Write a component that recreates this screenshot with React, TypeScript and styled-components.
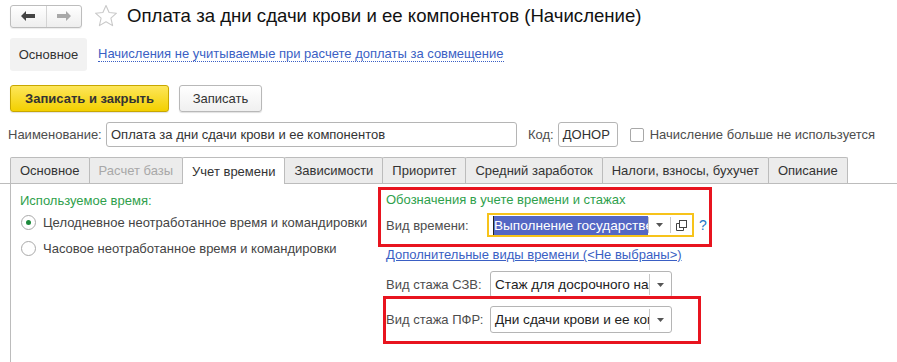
import React from "react";
import styled, { createGlobalStyle } from "styled-components";

const GlobalStyle = createGlobalStyle`
  html, body {
    margin: 0;
    padding: 0;
    background: #fff;
  }
  body {
    font-family: "Liberation Sans", Arial, sans-serif;
    font-size: 13px;
    color: #4d4d4d;
  }
`;

const Page = styled.div`
  width: 897px;
  height: 362px;
  overflow: hidden;
  position: relative;
`;

/* ---------- header ---------- */

const Header = styled.div`
  display: flex;
  align-items: center;
  height: 24px;
  padding: 4px 0 0 10px;
`;

const NavGroup = styled.div`
  display: flex;
  width: 72px;
  height: 23px;
  box-sizing: border-box;
  border: 1px solid #bdbdbd;
  border-radius: 3px;
  background: linear-gradient(#ffffff, #eeeeee);
  box-shadow: 0 1px 1px rgba(0, 0, 0, 0.08);
`;

const NavButton = styled.div<{ $divider?: boolean }>`
  flex: 1;
  display: flex;
  align-items: center;
  justify-content: center;
  border-left: ${(p) => (p.$divider ? "1px solid #d4d4d4" : "none")};
`;

const StarBox = styled.div`
  width: 24px;
  height: 24px;
  margin: 0 9px 0 12px;
  display: flex;
  align-items: center;
  justify-content: center;
`;

const Title = styled.h1`
  margin: 0;
  font-size: 18.6px;
  font-weight: normal;
  color: #111;
  white-space: nowrap;
`;

/* ---------- section bar ---------- */

const SectionBar = styled.div`
  display: flex;
  align-items: center;
  gap: 11px;
  padding: 10px 0 0 10px;
`;

const SectionPill = styled.div`
  width: 77px;
  height: 33px;
  display: flex;
  align-items: center;
  justify-content: center;
  background: #f2f2f2;
  border-radius: 3px;
  color: #333;
`;

const DottedLink = styled.a`
  color: #3a5fc4;
  text-decoration: none;
  border-bottom: 1px dotted #3a5fc4;
  line-height: 14px;
  cursor: pointer;
`;

/* ---------- command bar ---------- */

const CommandBar = styled.div`
  display: flex;
  gap: 10px;
  padding: 14px 0 0 10px;
`;

const Button = styled.button<{ $primary?: boolean }>`
  height: 27px;
  box-sizing: border-box;
  padding: 0 12px;
  font-family: inherit;
  font-size: 13px;
  font-weight: ${(p) => (p.$primary ? "bold" : "normal")};
  color: #333;
  border-radius: 3px;
  border: 1px solid ${(p) => (p.$primary ? "#c8a700" : "#b8b8b8")};
  background: ${(p) =>
    p.$primary
      ? "linear-gradient(#fde65a, #f3d000)"
      : "linear-gradient(#ffffff, #f0f0f0)"};
  box-shadow: 0 1px 1px rgba(0, 0, 0, 0.12);
  width: ${(p) => (p.$primary ? "159px" : "83px")};
`;

/* ---------- name row ---------- */

const FieldRow = styled.div`
  display: flex;
  align-items: center;
  padding: 10px 0 0 8px;
  height: 25px;
`;

const Label = styled.span<{ $width?: number }>`
  white-space: nowrap;
  flex: none;
  width: ${(p) => (p.$width ? `${p.$width}px` : "auto")};
`;

const TextInput = styled.div<{ $width: number }>`
  width: ${(p) => p.$width}px;
  height: 25px;
  box-sizing: border-box;
  border: 1px solid #b5b5b5;
  border-radius: 3px;
  padding: 0 4px;
  display: flex;
  align-items: center;
  color: #333;
  white-space: nowrap;
  overflow: hidden;
`;

const CheckLabel = styled.label`
  display: flex;
  align-items: center;
  gap: 6px;
  margin-left: 12px;
  white-space: nowrap;
`;

const CheckBox = styled.span`
  width: 14px;
  height: 14px;
  box-sizing: border-box;
  border: 1px solid #a8a8a8;
  border-radius: 2px;
  background: #fff;
`;

/* ---------- tabs ---------- */

const TabStrip = styled.div`
  display: flex;
  margin-top: 10px;
  padding-left: 10px;
  border-bottom: 1px solid #bcbcbc;
  height: 26px;
`;

const Tab = styled.div<{ $active?: boolean; $disabled?: boolean }>`
  box-sizing: border-box;
  padding: 0 9px;
  display: flex;
  align-items: center;
  white-space: nowrap;
  border: 1px solid #bcbcbc;
  border-bottom: none;
  margin-left: -1px;
  border-radius: 2px 2px 0 0;
  background: ${(p) => (p.$active ? "#fff" : "#ececec")};
  color: ${(p) => (p.$disabled ? "#a8a8a8" : "#333")};
  height: ${(p) => (p.$active ? "27px" : "26px")};
  position: relative;
  &:first-child {
    margin-left: 0;
  }
`;

const Panel = styled.div`
  margin-left: 10px;
  border-left: 1px solid #bcbcbc;
  height: 180px;
  display: grid;
  grid-template-columns: 367px 1fr;
`;

const LeftCol = styled.div`
  padding: 9px 0 0 9px;
  display: flex;
  flex-direction: column;
`;

const GroupTitle = styled.div`
  color: #2f9f4c;
  line-height: 16px;
  white-space: nowrap;
`;

const RadioRow = styled.label`
  display: flex;
  align-items: center;
  gap: 7px;
  height: 26px;
  color: #444;
  white-space: nowrap;
`;

const RadioCircle = styled.span<{ $checked?: boolean }>`
  width: 15px;
  height: 15px;
  box-sizing: border-box;
  border-radius: 50%;
  border: 1px solid #a9a9a9;
  background: #fff;
  display: flex;
  align-items: center;
  justify-content: center;
  margin-left: 1px;
  &::after {
    content: "";
    display: ${(p) => (p.$checked ? "block" : "none")};
    width: 5px;
    height: 5px;
    border-radius: 50%;
    background: #1d8a3c;
  }
`;

const RightCol = styled.div`
  display: flex;
  flex-direction: column;
  padding-top: 3px;
`;

const Highlight = styled.div<{ $width: number }>`
  border: 3px solid #e8141f;
  width: ${(p) => p.$width}px;
  box-sizing: border-box;
`;

const TopHighlight = styled(Highlight)`
  height: 60px;
  padding: 2px 0 0 5px;
`;

const BottomHighlight = styled(Highlight)`
  height: 48px;
  margin: -2px 0 0 5px;
  padding-top: 7px;
`;

const SelectRow = styled.div<{ $mt?: number }>`
  display: flex;
  align-items: center;
  margin-top: ${(p) => p.$mt ?? 0}px;
`;

const FocusFrame = styled.div`
  border: 2px solid #f7c31a;
  height: 24px;
  width: 207px;
  box-sizing: border-box;
  display: flex;
  align-items: stretch;
`;

const SelectedText = styled.div`
  flex: 1;
  display: flex;
  align-items: center;
  padding-left: 4px;
  overflow: hidden;
  white-space: nowrap;
  color: #111;
  font-size: 13.6px;
`;

const Selection = styled.span`
  display: block;
  background: #5467c4;
  color: #fff;
  border-left: 1px solid #222;
  height: 19px;
  line-height: 19px;
  overflow: hidden;
`;

const Drop = styled.div`
  width: 21px;
  flex: none;
  display: flex;
  align-items: center;
  justify-content: center;
  border-left: 1px solid #c8c8c8;
  margin: 2px 0;
`;

const HelpMark = styled.span`
  color: #1e78c8;
  font-size: 14px;
  margin-left: 5px;
`;

const SolidLink = styled.a`
  color: #3a5fc4;
  text-decoration: underline;
  white-space: nowrap;
  cursor: pointer;
  margin: 0 0 0 8px;
  line-height: 16px;
`;

const Select = styled.div`
  width: 182px;
  height: 27px;
  box-sizing: border-box;
  border: 1px solid #b5b5b5;
  border-radius: 3px;
  display: flex;
  align-items: stretch;
  background: #fff;
`;

const SelectValue = styled.div`
  flex: 1;
  display: flex;
  align-items: center;
  padding-left: 4px;
  overflow: hidden;
  white-space: nowrap;
  color: #222;
  font-size: 13.6px;
`;

const StandaloneRow = styled(SelectRow)`
  margin-left: 8px;
`;

const DropArrow = () => (
  <svg width="7" height="4" viewBox="0 0 7 4">
    <path d="M0 0h7L3.5 4z" fill="#555" />
  </svg>
);

const OpenIcon = () => (
  <svg width="11" height="11" viewBox="0 0 11 11" fill="none" stroke="#444">
    <rect x="3.5" y="0.5" width="7" height="7" />
    <path d="M3.5 3.5H0.5v7h7V7.5" />
  </svg>
);

const Star = () => (
  <svg width="24" height="24" viewBox="0 0 24 24">
    <path
      d="M12 1.5l3.1 7 7.4.7-5.6 5 1.7 7.4L12 17.7l-6.6 3.9 1.7-7.4-5.6-5 7.4-.7z"
      fill="none"
      stroke="#c9c9c9"
      strokeWidth="1.1"
      strokeLinejoin="round"
    />
  </svg>
);

const Arrow = ({ dir, color }: { dir: "left" | "right"; color: string }) => (
  <svg width="14" height="10" viewBox="0 0 14 10">
    <path
      d={dir === "left" ? "M0 5l5-5v3h9v4H5v3z" : "M14 5L9 0v3H0v4h9v3z"}
      fill={color}
    />
  </svg>
);

const tabs = [
  { title: "Основное" },
  { title: "Расчет базы", disabled: true },
  { title: "Учет времени", active: true },
  { title: "Зависимости" },
  { title: "Приоритет" },
  { title: "Средний заработок" },
  { title: "Налоги, взносы, бухучет" },
  { title: "Описание" },
];

export default function App() {
  return (
    <Page>
      <GlobalStyle />
      <Header>
        <NavGroup>
          <NavButton>
            <Arrow dir="left" color="#444" />
          </NavButton>
          <NavButton $divider>
            <Arrow dir="right" color="#a8a8a8" />
          </NavButton>
        </NavGroup>
        <StarBox>
          <Star />
        </StarBox>
        <Title>Оплата за дни сдачи крови и ее компонентов (Начисление)</Title>
      </Header>

      <SectionBar>
        <SectionPill>Основное</SectionPill>
        <DottedLink>
          Начисления не учитываемые при расчете доплаты за совмещение
        </DottedLink>
      </SectionBar>

      <CommandBar>
        <Button $primary>Записать и закрыть</Button>
        <Button>Записать</Button>
      </CommandBar>

      <FieldRow>
        <Label $width={98}>Наименование:</Label>
        <TextInput $width={411}>Оплата за дни сдачи крови и ее компонентов</TextInput>
        <Label style={{ marginLeft: 11 }}>Код:</Label>
        <TextInput $width={60} style={{ marginLeft: 4 }}>
          ДОНОР
        </TextInput>
        <CheckLabel>
          <CheckBox />
          Начисление больше не используется
        </CheckLabel>
      </FieldRow>

      <TabStrip>
        {tabs.map((t) => (
          <Tab key={t.title} $active={t.active} $disabled={t.disabled}>
            {t.title}
          </Tab>
        ))}
      </TabStrip>

      <Panel>
        <LeftCol>
          <GroupTitle>Используемое время:</GroupTitle>
          <RadioRow>
            <RadioCircle $checked />
            Целодневное неотработанное время и командировки
          </RadioRow>
          <RadioRow>
            <RadioCircle />
            Часовое неотработанное время и командировки
          </RadioRow>
        </LeftCol>

        <RightCol>
          <TopHighlight $width={334}>
            <GroupTitle>Обозначения в учете времени и стажах</GroupTitle>
            <SelectRow $mt={5}>
              <Label $width={101}>Вид времени:</Label>
              <FocusFrame>
                <SelectedText>
                  <Selection>Выполнение государственных обязанностей</Selection>
                </SelectedText>
                <Drop>
                  <DropArrow />
                </Drop>
                <Drop>
                  <OpenIcon />
                </Drop>
              </FocusFrame>
              <HelpMark>?</HelpMark>
            </SelectRow>
          </TopHighlight>

          <SolidLink>Дополнительные виды времени (&lt;Не выбраны&gt;)</SolidLink>

          <StandaloneRow $mt={8}>
            <Label $width={104}>Вид стажа СЗВ:</Label>
            <Select>
              <SelectValue>Стаж для досрочного назначения пенсии</SelectValue>
              <Drop>
                <DropArrow />
              </Drop>
            </Select>
          </StandaloneRow>

          <BottomHighlight $width={318}>
            <SelectRow>
              <Label $width={104}>Вид стажа ПФР:</Label>
              <Select>
                <SelectValue>Дни сдачи крови и ее компонентов</SelectValue>
                <Drop>
                  <DropArrow />
                </Drop>
              </Select>
            </SelectRow>
          </BottomHighlight>
        </RightCol>
      </Panel>
    </Page>
  );
}
